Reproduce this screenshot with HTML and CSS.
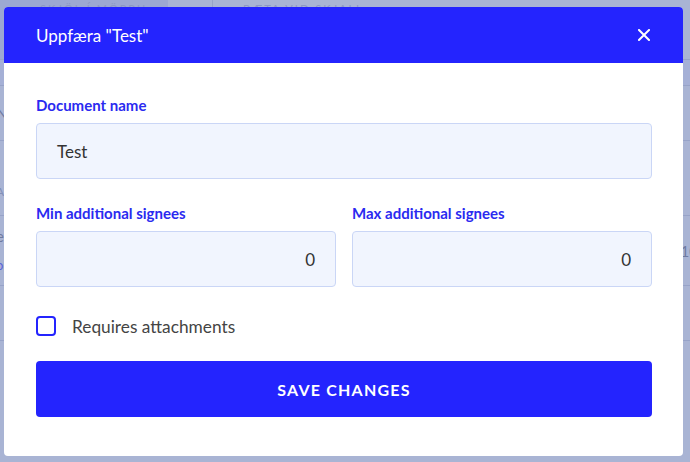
FILE: index.html
```html
<!DOCTYPE html>
<html lang="is">
<head>
<meta charset="utf-8">
<title>Uppfæra "Test"</title>
<link rel="stylesheet" href="styles.css">
</head>
<body>
<div class="page">
  <div class="topbar">
    <div class="tab tab-active">Skjöl í möppu</div>
    <div class="tab">Bæta við skjali</div>
  </div>
  <div class="row row-head"></div>
  <div class="row"><span>Nafn</span><span></span></div>
  <div class="row row-b"><span class="small">A</span><span class="small">A</span></div>
  <div class="row row-c"><span>e<br><em>o</em></span><span>10</span></div>
  <div class="row"></div>
</div>

<div class="modal" role="dialog">
  <header class="modal-header">
    <h1 class="modal-title">Uppfæra "Test"</h1>
    <button class="close" aria-label="Close">
      <svg width="12" height="12" viewBox="0 0 12 12"><path d="M1 1L11 11M11 1L1 11" stroke="#fff" stroke-width="2" stroke-linecap="square"/></svg>
    </button>
  </header>
  <div class="modal-body">
    <div class="field">
      <label class="label">Document name</label>
      <div class="input">Test</div>
    </div>
    <div class="grid">
      <div class="field">
        <label class="label">Min additional signees</label>
        <div class="input num">0</div>
      </div>
      <div class="field">
        <label class="label">Max additional signees</label>
        <div class="input num">0</div>
      </div>
    </div>
    <div class="check-row">
      <span class="checkbox"></span>
      <span class="check-label">Requires attachments</span>
    </div>
    <button class="save">SAVE CHANGES</button>
  </div>
</div>
</body>
</html>
```

FILE: styles.css
```css
* { box-sizing: border-box; }
html, body { margin: 0; padding: 0; }
body {
  width: 690px;
  height: 462px;
  overflow: hidden;
  background: #a9b4d4;
  font-family: Lato, "Liberation Sans", sans-serif;
  position: relative;
}
.page {
  color: #6f7aa0;
  font-size: 15px;
}
.topbar {
  display: flex;
  height: 60px;
  border-bottom: 1px solid #97a3c8;
}
.tab {
  padding: 2px 0 0 40px;
  font-size: 11px;
  letter-spacing: 2px;
  text-transform: uppercase;
  color: #8c98c4;
}
.tab-active {
  width: 168px;
  background: #9ca8d2;
}
.tab + .tab { border-left: 1px solid #97a3c8; margin-left: 44px; padding-left: 30px; }
.row {
  display: flex;
  justify-content: space-between;
  height: 55px;
  border-bottom: 1px solid #97a3c8;
  align-items: center;
}
.row-head { height: 26px; background: #a5b0d6; }
.row-b { height: 75px; align-items: flex-end; padding-bottom: 16px; }
.row-c { height: 70px; }
.row span { display: block; margin-left: -4px; line-height: 28px; }
.row span:last-child { margin-right: -8px; }
.row .small { font-size: 12px; line-height: 14px; color: #8390b8; }
.row em { font-style: normal; color: #5a63d8; font-size: 13px; }

.modal {
  position: absolute;
  left: 4px;
  top: 7px;
  width: 679px;
  height: 449px;
  background: #fff;
  border-radius: 4px;
  overflow: hidden;
}
.modal-header {
  height: 56px;
  background: #2424fe;
  display: flex;
  align-items: center;
  justify-content: space-between;
  padding: 0 33px 0 32px;
}
.modal-title {
  margin: 0;
  font-size: 17px;
  font-weight: 400;
  color: #fff;
}
.close {
  border: 0;
  background: none;
  padding: 0;
  width: 12px;
  height: 12px;
  display: flex;
  margin-top: -1px;
}
.modal-body {
  padding: 32px 31px 39px 32px;
}
.field { display: flex; flex-direction: column; }
.label {
  display: block;
  font-size: 15px;
  line-height: 20px;
  font-weight: 700;
  color: #2a2af0;
  margin-bottom: 8px;
}
.input {
  height: 56px;
  background: #f1f5fe;
  border: 1px solid #cad6f6;
  border-radius: 4px;
  padding: 0 20px;
  display: flex;
  align-items: center;
  font-size: 17px;
  color: #333;
}
.input.num { justify-content: flex-end; padding-right: 20px; }
.grid {
  display: grid;
  grid-template-columns: 1fr 1fr;
  column-gap: 16px;
  margin-top: 24px;
}
.check-row {
  display: flex;
  align-items: center;
  gap: 16px;
  height: 24px;
  margin-top: 27px;
}
.checkbox {
  width: 20px;
  height: 20px;
  border: 2px solid #2424fe;
  border-radius: 4px;
}
.check-label {
  font-size: 17.3px;
  color: #444;
}
.save {
  display: block;
  width: 100%;
  height: 56px;
  margin-top: 23px;
  border: 0;
  border-radius: 4px;
  background: #2424fe;
  color: #fff;
  font-family: inherit;
  font-size: 16px;
  font-weight: 700;
  letter-spacing: 1.2px;
  padding-top: 1px;
}
```
